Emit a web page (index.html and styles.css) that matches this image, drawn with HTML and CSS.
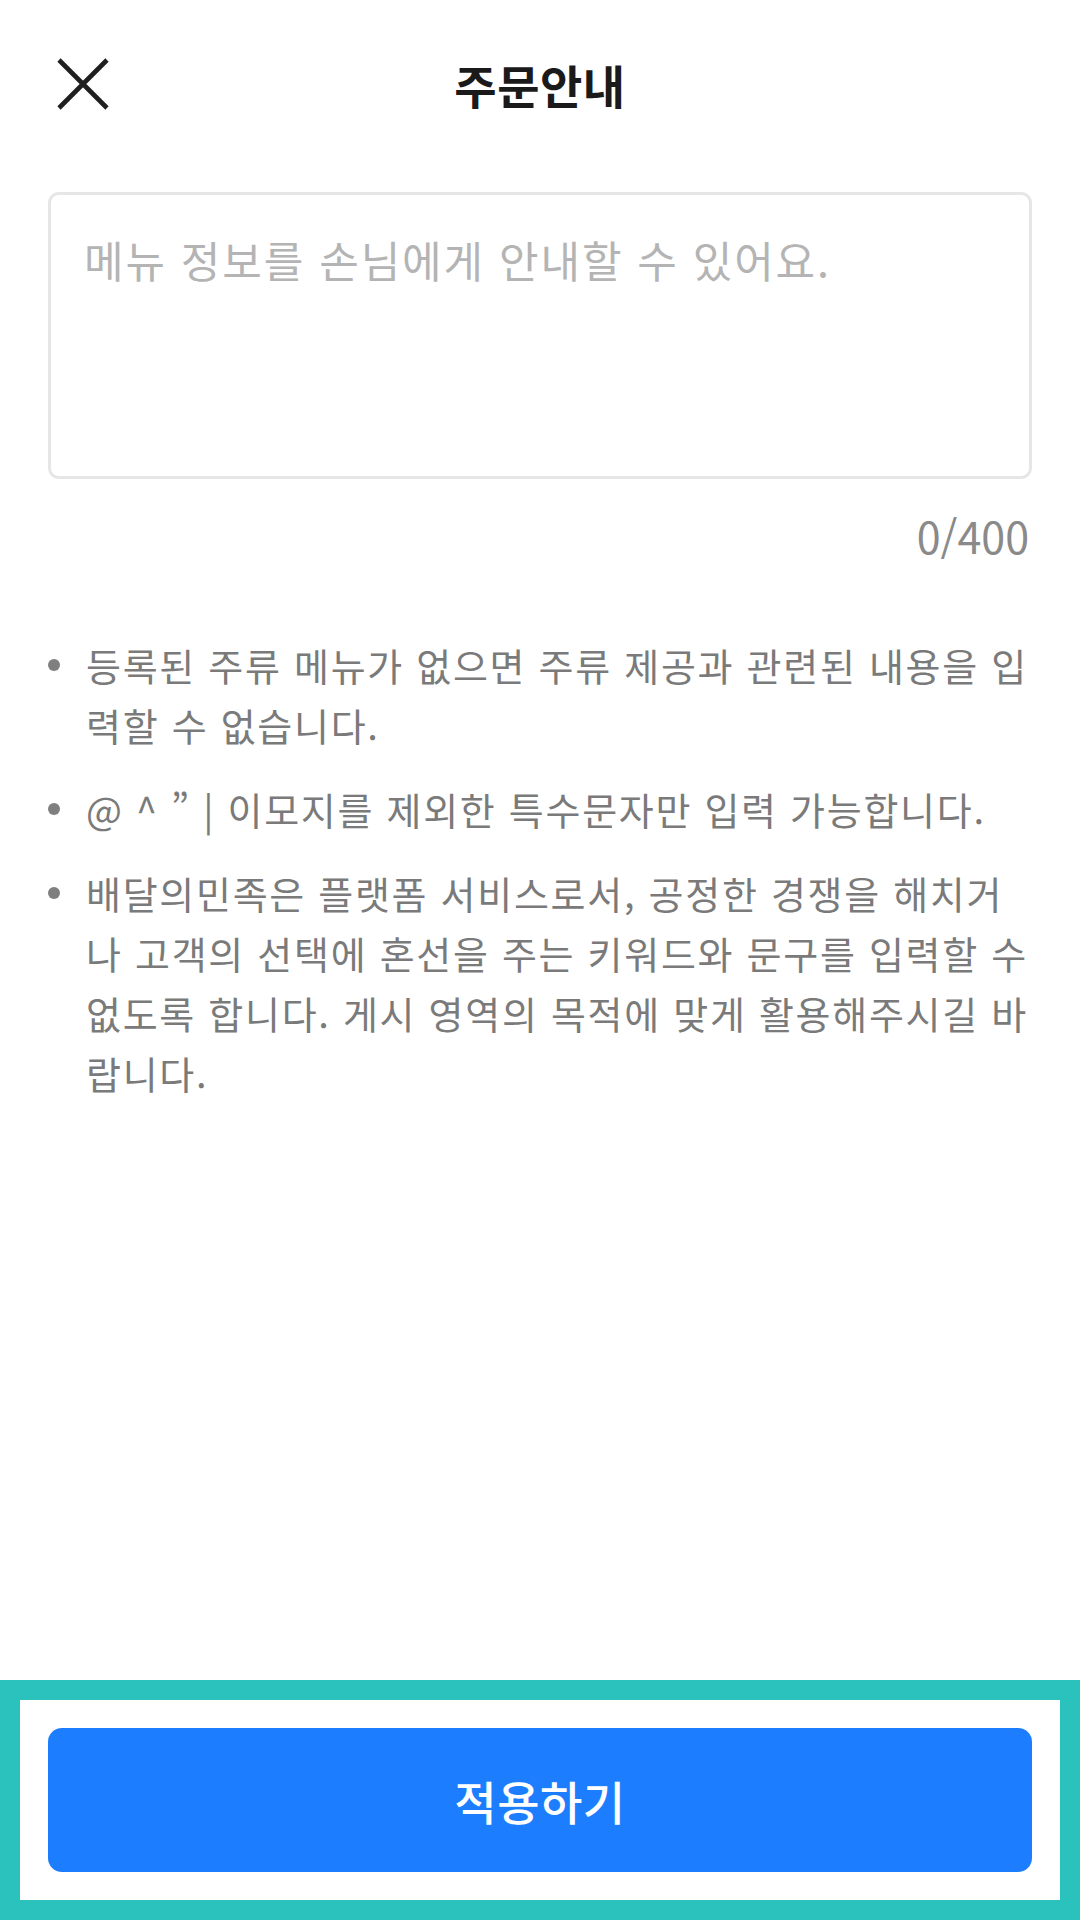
FILE: index.html
```html
<!DOCTYPE html>
<html lang="ko">
<head>
<meta charset="utf-8">
<title>주문안내</title>
<link rel="stylesheet" href="styles.css">
</head>
<body>
<div class="page">
  <header class="header">
    <button class="close" aria-label="닫기">
      <svg width="52" height="52" viewBox="0 0 52 52"><path d="M2 2L50 50M50 2L2 50" stroke="#1f1f1f" stroke-width="4.6" fill="none"/></svg>
    </button>
    <h1 class="title">주문안내</h1>
    <span class="spacer"></span>
  </header>
  <main class="content">
    <textarea class="memo" placeholder="메뉴 정보를 손님에게 안내할 수 있어요."></textarea>
    <div class="counter">0/400</div>
    <ul class="notes">
      <li><span class="note-text">등록된 주류 메뉴가 없으면 주류 제공과 관련된 내용을 입<br>력할 수 없습니다.</span></li>
      <li><span class="note-text">@ ^ ” | 이모지를 제외한 특수문자만 입력 가능합니다.</span></li>
      <li><span class="note-text">배달의민족은 플랫폼 서비스로서, 공정한 경쟁을 해치거<br>나 고객의 선택에 혼선을 주는 키워드와 문구를 입력할 수<br>없도록 합니다. 게시 영역의 목적에 맞게 활용해주시길 바<br>랍니다.</span></li>
    </ul>
  </main>
  <footer class="footer">
    <button class="apply">적용하기</button>
  </footer>
</div>
</body>
</html>
```

FILE: styles.css
```css
html, body {
  margin: 0;
  padding: 0;
  background: #ffffff;
}
body {
  font-family: "Noto Sans CJK KR", "Noto Sans", sans-serif;
}
.page {
  width: 1080px;
  height: 1920px;
  display: flex;
  flex-direction: column;
  box-sizing: border-box;
}
.header {
  height: 168px;
  display: grid;
  grid-template-columns: 1fr auto 1fr;
  align-items: center;
}
.close {
  justify-self: start;
  margin-left: 57px;
  width: 52px;
  height: 52px;
  padding: 0;
  border: 0;
  background: none;
  display: flex;
}
.title {
  margin: 0;
  font-size: 46px;
  font-weight: 700;
  color: #1a1a1a;
  line-height: 60px;
  letter-spacing: 0.5px;
}
.content {
  flex: 1;
  padding: 24px 48px 0;
  display: flex;
  flex-direction: column;
}
.memo {
  display: block;
  width: 100%;
  height: 287px;
  box-sizing: border-box;
  border: 3px solid #e6e6e6;
  border-radius: 11px;
  padding: 34px 33px;
  margin: 0;
  resize: none;
  outline: none;
  font-family: "Noto Sans CJK KR", "Noto Sans", sans-serif;
  font-size: 43px;
  line-height: 60px;
  letter-spacing: 1.9px;
  color: #222;
  background: #fff;
}
.memo::placeholder {
  color: #b4b4b4;
}
.counter {
  margin-top: 26px;
  text-align: right;
  font-size: 43px;
  line-height: 60px;
  color: #8a8a8a;
  padding-right: 3px;
  letter-spacing: 0;
}
.notes {
  list-style: none;
  margin: 70px 0 0;
  padding: 0;
  display: flex;
  flex-direction: column;
  gap: 24px;
}
.notes li {
  display: flex;
  align-items: flex-start;
  font-size: 38px;
  line-height: 60px;
  letter-spacing: 1.7px;
  color: #7a7a7a;
}
.notes li::before {
  content: "";
  flex: none;
  width: 12px;
  height: 12px;
  border-radius: 50%;
  background: #7f7f7f;
  margin: 24px 26px 0 0;
}
.note-text {
  white-space: nowrap;
}
.footer {
  border: 20px solid #2bc2bd;
  padding: 28px;
  background: #fff;
}
.apply {
  display: block;
  width: 100%;
  height: 144px;
  border: 0;
  border-radius: 14px;
  background: #1c7eff;
  color: #ffffff;
  font-family: "Noto Sans CJK KR", "Noto Sans", sans-serif;
  font-size: 46px;
  font-weight: 500;
  letter-spacing: 0.5px;
}
```
